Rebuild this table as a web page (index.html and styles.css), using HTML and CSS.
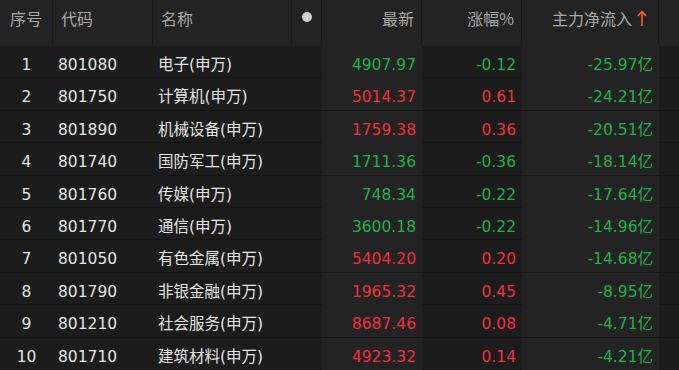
FILE: index.html
```html
<!DOCTYPE html>
<html lang="zh">
<head>
<meta charset="utf-8">
<link rel="stylesheet" href="styles.css">
</head>
<body>
<div class="table">
  <div class="head">
    <div class="hc c-idx">序号</div>
    <div class="hc c-code">代码</div>
    <div class="hc c-name">名称</div>
    <div class="hc c-dot"><span class="dot"></span></div>
    <div class="hc c-num">最新</div>
    <div class="hc c-num">涨幅%</div>
    <div class="hc c-num c-flow">主力净流入<svg class="arrow" width="10" height="17" viewBox="0 0 10 17"><path d="M5 2.5V17M1 7L5 2.5L9 7" fill="none" stroke="#ff5a25" stroke-width="1.6"/></svg></div>
    <div class="hc c-end"></div>
  </div>
  <div class="row"><div class="c-idx">1</div><div class="c-code">801080</div><div class="c-name">电子(申万)</div><div></div><div class="c-num lt dn">4907.97</div><div class="c-num dn">-0.12</div><div class="c-num lt dn">-25.97亿</div><div></div></div>
  <div class="row"><div class="c-idx">2</div><div class="c-code">801750</div><div class="c-name">计算机(申万)</div><div></div><div class="c-num lt up">5014.37</div><div class="c-num up">0.61</div><div class="c-num lt dn">-24.21亿</div><div></div></div>
  <div class="row"><div class="c-idx">3</div><div class="c-code">801890</div><div class="c-name">机械设备(申万)</div><div></div><div class="c-num lt up">1759.38</div><div class="c-num up">0.36</div><div class="c-num lt dn">-20.51亿</div><div></div></div>
  <div class="row"><div class="c-idx">4</div><div class="c-code">801740</div><div class="c-name">国防军工(申万)</div><div></div><div class="c-num lt dn">1711.36</div><div class="c-num dn">-0.36</div><div class="c-num lt dn">-18.14亿</div><div></div></div>
  <div class="row"><div class="c-idx">5</div><div class="c-code">801760</div><div class="c-name">传媒(申万)</div><div></div><div class="c-num lt dn">748.34</div><div class="c-num dn">-0.22</div><div class="c-num lt dn">-17.64亿</div><div></div></div>
  <div class="row"><div class="c-idx">6</div><div class="c-code">801770</div><div class="c-name">通信(申万)</div><div></div><div class="c-num lt dn">3600.18</div><div class="c-num dn">-0.22</div><div class="c-num lt dn">-14.96亿</div><div></div></div>
  <div class="row"><div class="c-idx">7</div><div class="c-code">801050</div><div class="c-name">有色金属(申万)</div><div></div><div class="c-num lt up">5404.20</div><div class="c-num up">0.20</div><div class="c-num lt dn">-14.68亿</div><div></div></div>
  <div class="row"><div class="c-idx">8</div><div class="c-code">801790</div><div class="c-name">非银金融(申万)</div><div></div><div class="c-num lt up">1965.32</div><div class="c-num up">0.45</div><div class="c-num lt dn">-8.95亿</div><div></div></div>
  <div class="row"><div class="c-idx">9</div><div class="c-code">801210</div><div class="c-name">社会服务(申万)</div><div></div><div class="c-num lt up">8687.46</div><div class="c-num up">0.08</div><div class="c-num lt dn">-4.71亿</div><div></div></div>
  <div class="row"><div class="c-idx">10</div><div class="c-code">801710</div><div class="c-name">建筑材料(申万)</div><div></div><div class="c-num lt up">4923.32</div><div class="c-num up">0.14</div><div class="c-num lt dn">-4.21亿</div><div></div></div>
</div>
</body>
</html>
```
FILE: styles.css
```css
html, body {
  margin: 0;
  padding: 0;
  background: #1c1c1c;
  width: 679px;
  height: 370px;
  overflow: hidden;
}
.table {
  font-family: "DejaVu Sans", "Noto Sans CJK SC", sans-serif;
  font-size: 15.5px;
  color: #e4e4e4;
}
.head, .row {
  display: grid;
  grid-template-columns: 53px 100px 139px 30px 100px 100px 137px 20px;
}
.head {
  height: 46px;
  background: #232323;
  color: #a9a9a9;
  font-family: "Noto Sans CJK SC", sans-serif;
  font-size: 16px;
}
.hc {
  border-right: 1px solid #1a1a1a;
  height: 45px;
  box-sizing: border-box;
  padding-top: 7px;
  line-height: 22px;
  white-space: nowrap;
}
.hc.c-idx { padding-left: 10px; }
.hc.c-code, .hc.c-name { padding-left: 8px; }
.hc.c-dot { display: flex; justify-content: center; padding-top: 12px; }
.dot {
  width: 10px;
  height: 10px;
  border-radius: 50%;
  background: #cfcfcf;
}
.hc.c-num { text-align: right; padding-right: 7px; }
.hc.c-flow {
  display: flex;
  justify-content: flex-end;
  align-items: flex-start;
  gap: 5px;
  padding-right: 11px;
}
.arrow { margin-top: 2px; }
.hc.c-end { border-right: none; }
.row {
  height: 32.4px;
  box-sizing: border-box;
  border-bottom: 1px solid #141414;
  line-height: 26px;
  white-space: nowrap;
}
.row > div { height: 100%; padding-top: 6px; box-sizing: border-box; }
.row .c-idx { text-align: center; }
.row .c-code { padding-left: 5px; }
.row .c-name { padding-left: 5px; }
.row .c-num { text-align: right; padding-right: 6px; }
.row .lt { background: #232323; }
.up { color: #f0303c; }
.dn { color: #22b04a; }
```
